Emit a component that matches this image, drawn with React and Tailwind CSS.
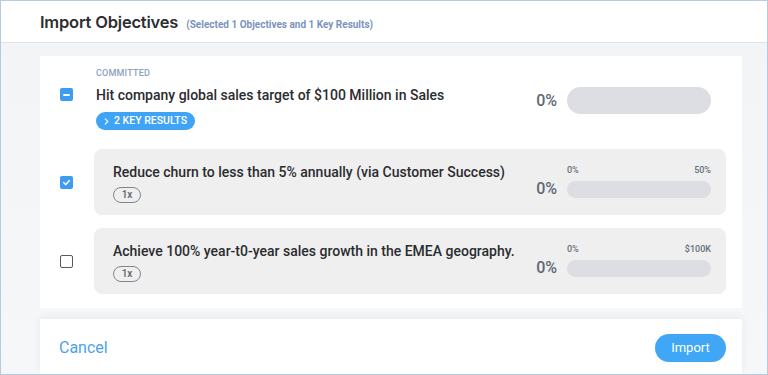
import React from "react";

function Check({ state }) {
  if (state === "checked")
    return (
      <div className="w-[13px] h-[13px] rounded-[2px] bg-[#3d9bf0] flex items-center justify-center">
        <svg width="9" height="9" viewBox="0 0 10 10"><path d="M2 5.2 L4.2 7.3 L8.2 2.8" fill="none" stroke="#fff" strokeWidth="1.7" strokeLinecap="round" strokeLinejoin="round" /></svg>
      </div>
    );
  if (state === "indeterminate")
    return (
      <div className="w-[13px] h-[13px] rounded-[2px] bg-[#3d9bf0] flex items-center justify-center">
        <div className="w-[7px] h-[2px] bg-white rounded-[1px]" />
      </div>
    );
  return <div className="w-[13px] h-[13px] rounded-[2px] border-[1.5px] border-[#555a60] bg-white" />;
}

function KRRow({ state, title, target }) {
  return (
    <div className="flex items-center">
      <div className="w-[35px] flex items-center pl-px">
        <Check state={state} />
      </div>
      <div className="flex-1 bg-[#efefef] rounded-[8px] h-[66px] pl-[19px] pr-[15px] flex items-center">
        <div className="flex-1 flex flex-col pt-[1px]">
          <div className="text-[14px] leading-[18px] font-medium text-[#2b2c30]">{title}</div>
          <div className="mt-[6px] w-[28px] h-[16px] rounded-full border border-[#80858c] text-[10px] text-[#5c6168] flex items-center justify-center font-medium">1x</div>
        </div>
        <div className="flex items-end pb-[1px]">
          <div className="text-[16px] leading-[18px] text-[#5e6875] mr-[10px] font-medium">0%</div>
          <div className="w-[144px] flex flex-col">
            <div className="flex justify-between text-[9px] leading-[11px] text-[#66707c] font-medium mb-[5px]">
              <span>0%</span>
              <span>{target}</span>
            </div>
            <div className="h-[17px] rounded-full bg-[#dcdee3]" />
          </div>
        </div>
      </div>
    </div>
  );
}

export default function App() {
  return (
    <div className="w-[768px] h-[375px] border border-[#b8cade] overflow-hidden flex flex-col bg-[#f4f5f7] font-['Roboto',sans-serif]">
      <div className="h-[42px] shrink-0 bg-white border-b border-[#dde5ee] flex items-center pl-[39px] pt-[2px]">
        <span className="text-[16.5px] font-semibold text-[#2d2e32] font-['Inter',sans-serif] tracking-[-0.2px]">Import Objectives</span>
        <span className="ml-[8px] text-[10px] font-bold text-[#7a93bd] pt-[3px]">(Selected 1 Objectives and 1 Key Results)</span>
      </div>
      <div className="flex-1 flex flex-col pl-[39px] pr-[25px] pt-[13px] bg-gradient-to-b from-[#f2f4f6] to-[#f6f7f8]">
        <div className="bg-white h-[252px] pl-[19px] pr-[16px] pt-[12px] flex flex-col">
          <div className="flex">
            <div className="w-[35px] pt-[20px] pl-px">
              <Check state="indeterminate" />
            </div>
            <div className="flex-1 flex pl-[2px] pr-[15px]">
              <div className="flex-1 flex flex-col">
                <div className="text-[9px] leading-[11px] font-medium text-[#8aa0c2] tracking-[0.2px]">COMMITTED</div>
                <div className="mt-[7px] text-[14px] leading-[18px] font-medium text-[#2b2c30]">Hit company global sales target of $100 Million in Sales</div>
                <div className="mt-[8px] self-start h-[18px] pl-[7px] pr-[8px] rounded-full bg-[#3fa3f6] text-white text-[10.5px] font-medium flex items-center gap-[4px]">
                  <svg width="7" height="7" viewBox="0 0 8 8"><path d="M2.5 1 L5.5 4 L2.5 7" fill="none" stroke="#fff" strokeWidth="1.3" strokeLinecap="round" strokeLinejoin="round" /></svg>
                  <span>2 KEY RESULTS</span>
                </div>
              </div>
              <div className="flex items-center self-start mt-[19px]">
                <div className="text-[16px] leading-[18px] text-[#5e6875] mr-[10px] font-medium">0%</div>
                <div className="w-[144px] h-[27px] rounded-full bg-[#dcdee3]" />
              </div>
            </div>
          </div>
          <div className="mt-[19px] flex flex-col gap-[13px]">
            <KRRow state="checked" title="Reduce churn to less than 5% annually (via Customer Success)" target="50%" />
            <KRRow state="unchecked" title="Achieve 100% year-t0-year sales growth in the EMEA geography." target="$100K" />
          </div>
        </div>
        <div className="mt-[11px] flex-1 bg-white shadow-[0_-2px_8px_rgba(0,0,0,0.06)] pl-[19px] pr-[16px] flex items-center justify-between pt-[3px]">
          <span className="text-[16px] text-[#4aa3ec]">Cancel</span>
          <button className="h-[28px] w-[71px] rounded-full bg-[#40a6f6] text-white text-[13px] flex items-center justify-center">Import</button>
        </div>
      </div>
    </div>
  );
}
